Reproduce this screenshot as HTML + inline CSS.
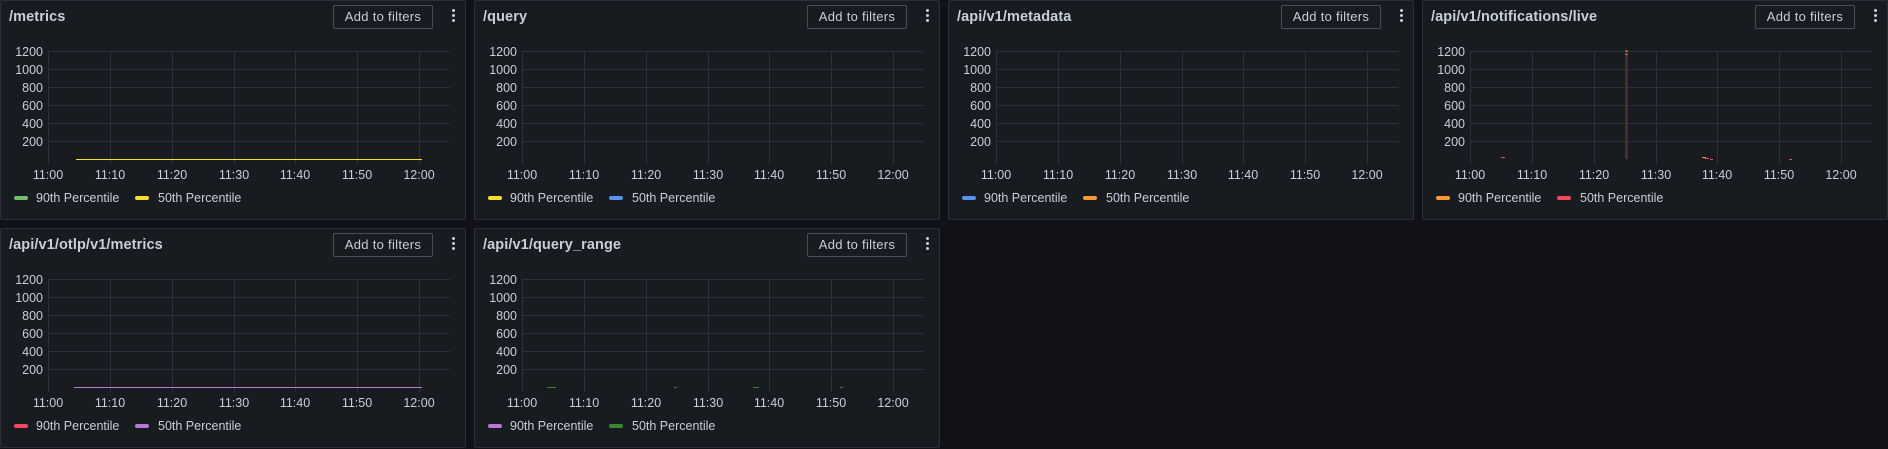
<!DOCTYPE html>
<html><head><meta charset="utf-8"><style>
*{margin:0;padding:0;box-sizing:border-box}
body{width:1888px;height:448px;background:#111217;overflow:hidden;font-family:"Liberation Sans",sans-serif;position:relative}
.p{position:absolute;width:466px;height:220px;background:#181b1f;border:1px solid #2c2f35;border-radius:2px}
.t{position:absolute;left:8px;top:8px;font-size:14.5px;font-weight:bold;color:#c7d0d9;letter-spacing:.1px}
.b{position:absolute;left:332px;top:4px;width:100px;height:24px;border:1px solid #4a4d55;border-radius:2px;color:#ccccdc;font-size:13px;text-align:center;line-height:22px;letter-spacing:.3px}
.k{position:absolute;left:451px;top:8px;width:3px}
.k i{display:block;width:3px;height:3px;background:#ccccdc;border-radius:50%;margin-bottom:2px}
svg{position:absolute;left:0;top:0}
text{font-family:"Liberation Sans",sans-serif;font-size:12.5px;fill:#ccccdc}
</style></head><body>

<svg width="0" height="0" style="position:absolute">
<defs>
<g id="grid" stroke="#2e3137" stroke-width="1">
<line x1="47" y1="50.5" x2="449" y2="50.5"/><line x1="47" y1="68.5" x2="449" y2="68.5"/><line x1="47" y1="86.5" x2="449" y2="86.5"/><line x1="47" y1="104.5" x2="449" y2="104.5"/><line x1="47" y1="122.5" x2="449" y2="122.5"/><line x1="47" y1="140.5" x2="449" y2="140.5"/>
<line x1="47.5" y1="50" x2="47.5" y2="163"/><line x1="109.5" y1="50" x2="109.5" y2="163"/><line x1="171.5" y1="50" x2="171.5" y2="163"/><line x1="233.5" y1="50" x2="233.5" y2="163"/><line x1="294.5" y1="50" x2="294.5" y2="163"/><line x1="356.5" y1="50" x2="356.5" y2="163"/><line x1="418.5" y1="50" x2="418.5" y2="163"/>
</g>
</defs></svg>

<div class="p" style="left:0;top:0">
<svg width="466" height="220"><use href="#grid"/>
<g text-anchor="end"><text x="42" y="55">1200</text><text x="42" y="73">1000</text><text x="42" y="91">800</text><text x="42" y="109">600</text><text x="42" y="127">400</text><text x="42" y="145">200</text></g>
<g text-anchor="middle"><text x="47" y="178">11:00</text><text x="109" y="178">11:10</text><text x="171" y="178">11:20</text><text x="233" y="178">11:30</text><text x="294" y="178">11:40</text><text x="356" y="178">11:50</text><text x="418" y="178">12:00</text></g>
<line x1="75" y1="158.5" x2="421" y2="158.5" stroke="#fade2a" stroke-width="1"/>
<rect x="13" y="195" width="14" height="4" rx="2" fill="#73bf69"/><text x="35" y="201">90th Percentile</text>
<rect x="134" y="195" width="14" height="4" rx="2" fill="#fade2a"/><text x="157" y="201">50th Percentile</text>
</svg>
<div class="t">/metrics</div><div class="b">Add to filters</div><div class="k"><i></i><i></i><i></i></div></div>

<div class="p" style="left:474px;top:0">
<svg width="466" height="220"><use href="#grid"/>
<g text-anchor="end"><text x="42" y="55">1200</text><text x="42" y="73">1000</text><text x="42" y="91">800</text><text x="42" y="109">600</text><text x="42" y="127">400</text><text x="42" y="145">200</text></g>
<g text-anchor="middle"><text x="47" y="178">11:00</text><text x="109" y="178">11:10</text><text x="171" y="178">11:20</text><text x="233" y="178">11:30</text><text x="294" y="178">11:40</text><text x="356" y="178">11:50</text><text x="418" y="178">12:00</text></g>
<rect x="13" y="195" width="14" height="4" rx="2" fill="#fade2a"/><text x="35" y="201">90th Percentile</text>
<rect x="134" y="195" width="14" height="4" rx="2" fill="#5794f2"/><text x="157" y="201">50th Percentile</text>
</svg>
<div class="t">/query</div><div class="b">Add to filters</div><div class="k"><i></i><i></i><i></i></div></div>

<div class="p" style="left:948px;top:0">
<svg width="466" height="220"><use href="#grid"/>
<g text-anchor="end"><text x="42" y="55">1200</text><text x="42" y="73">1000</text><text x="42" y="91">800</text><text x="42" y="109">600</text><text x="42" y="127">400</text><text x="42" y="145">200</text></g>
<g text-anchor="middle"><text x="47" y="178">11:00</text><text x="109" y="178">11:10</text><text x="171" y="178">11:20</text><text x="233" y="178">11:30</text><text x="294" y="178">11:40</text><text x="356" y="178">11:50</text><text x="418" y="178">12:00</text></g>
<rect x="13" y="195" width="14" height="4" rx="2" fill="#5794f2"/><text x="35" y="201">90th Percentile</text>
<rect x="134" y="195" width="14" height="4" rx="2" fill="#ff9830"/><text x="157" y="201">50th Percentile</text>
</svg>
<div class="t">/api/v1/metadata</div><div class="b">Add to filters</div><div class="k"><i></i><i></i><i></i></div></div>

<div class="p" style="left:1422px;top:0">
<svg width="466" height="220"><use href="#grid"/>
<g text-anchor="end"><text x="42" y="55">1200</text><text x="42" y="73">1000</text><text x="42" y="91">800</text><text x="42" y="109">600</text><text x="42" y="127">400</text><text x="42" y="145">200</text></g>
<g text-anchor="middle"><text x="47" y="178">11:00</text><text x="109" y="178">11:10</text><text x="171" y="178">11:20</text><text x="233" y="178">11:30</text><text x="294" y="178">11:40</text><text x="356" y="178">11:50</text><text x="418" y="178">12:00</text></g>
<rect x="202" y="50" width="3" height="108" fill="#4a2b27"/>
<rect x="202" y="49" width="3" height="2" fill="#8a5a2a"/>
<rect x="202" y="53" width="3" height="1" fill="#f2495c"/>
<rect x="78" y="156" width="4" height="1" fill="#f2495c"/>
<rect x="279" y="156" width="4" height="1" fill="#ff9830"/><rect x="282" y="157" width="4" height="1" fill="#f2495c"/><rect x="287" y="158" width="3" height="1" fill="#f2495c"/>
<rect x="366" y="158" width="3" height="1" fill="#f2495c"/>
<rect x="13" y="195" width="14" height="4" rx="2" fill="#ff9830"/><text x="35" y="201">90th Percentile</text>
<rect x="134" y="195" width="14" height="4" rx="2" fill="#f2495c"/><text x="157" y="201">50th Percentile</text>
</svg>
<div class="t">/api/v1/notifications/live</div><div class="b">Add to filters</div><div class="k"><i></i><i></i><i></i></div></div>

<div class="p" style="left:0;top:228px">
<svg width="466" height="220"><use href="#grid"/>
<g text-anchor="end"><text x="42" y="55">1200</text><text x="42" y="73">1000</text><text x="42" y="91">800</text><text x="42" y="109">600</text><text x="42" y="127">400</text><text x="42" y="145">200</text></g>
<g text-anchor="middle"><text x="47" y="178">11:00</text><text x="109" y="178">11:10</text><text x="171" y="178">11:20</text><text x="233" y="178">11:30</text><text x="294" y="178">11:40</text><text x="356" y="178">11:50</text><text x="418" y="178">12:00</text></g>
<line x1="73" y1="158.5" x2="421" y2="158.5" stroke="#b877d9" stroke-width="1"/>
<rect x="13" y="195" width="14" height="4" rx="2" fill="#f2495c"/><text x="35" y="201">90th Percentile</text>
<rect x="134" y="195" width="14" height="4" rx="2" fill="#b877d9"/><text x="157" y="201">50th Percentile</text>
</svg>
<div class="t">/api/v1/otlp/v1/metrics</div><div class="b">Add to filters</div><div class="k"><i></i><i></i><i></i></div></div>

<div class="p" style="left:474px;top:228px">
<svg width="466" height="220"><use href="#grid"/>
<g text-anchor="end"><text x="42" y="55">1200</text><text x="42" y="73">1000</text><text x="42" y="91">800</text><text x="42" y="109">600</text><text x="42" y="127">400</text><text x="42" y="145">200</text></g>
<g text-anchor="middle"><text x="47" y="178">11:00</text><text x="109" y="178">11:10</text><text x="171" y="178">11:20</text><text x="233" y="178">11:30</text><text x="294" y="178">11:40</text><text x="356" y="178">11:50</text><text x="418" y="178">12:00</text></g>
<rect x="72" y="158" width="9" height="1" fill="#37872d"/><rect x="199" y="158" width="3" height="1" fill="#37872d"/><rect x="278" y="158" width="6" height="1" fill="#37872d"/><rect x="365" y="158" width="3" height="1" fill="#37872d"/>
<rect x="13" y="195" width="14" height="4" rx="2" fill="#b877d9"/><text x="35" y="201">90th Percentile</text>
<rect x="134" y="195" width="14" height="4" rx="2" fill="#37872d"/><text x="157" y="201">50th Percentile</text>
</svg>
<div class="t">/api/v1/query_range</div><div class="b">Add to filters</div><div class="k"><i></i><i></i><i></i></div></div>

</body></html>
